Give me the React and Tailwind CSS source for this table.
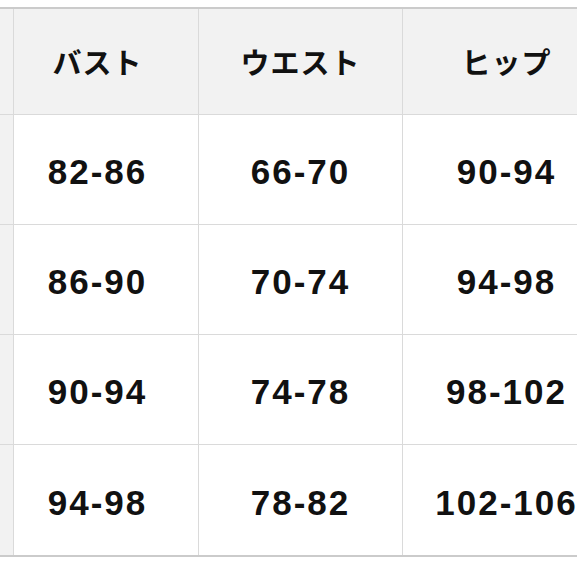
import React from "react";

const headers = ["バスト", "ウエスト", "ヒップ"];

const rows = [
  ["82-86", "66-70", "90-94"],
  ["86-90", "70-74", "94-98"],
  ["90-94", "74-78", "98-102"],
  ["94-98", "78-82", "102-106"],
];

export default function App() {
  return (
    <div className="w-[577px] h-[577px] overflow-hidden bg-white pt-[7px]">
      <div
        className="w-[611px] grid grid-cols-[14px_185px_204px_208px] border-t-2 border-b-2 border-[#cbcbcb] text-[#111]"
        style={{ fontFamily: '"Liberation Sans", "Noto Sans CJK JP", sans-serif' }}
      >
        {/* header row */}
        <div className="h-[106px] bg-[#f2f2f2] border-r border-b border-[#dadada]" />
        {headers.map((h, i) => (
          <div
            key={h}
            className={
              "h-[106px] bg-[#f2f2f2] border-r border-b border-[#dadada] flex items-center justify-center text-[29px] font-bold tracking-[1px] " +
              (i === 0 ? "pr-[17px]" : "")
            }
            style={{ fontFamily: '"Noto Sans CJK JP", sans-serif' }}
          >
            {h}
          </div>
        ))}

        {/* body rows */}
        {rows.map((r, ri) => (
          <React.Fragment key={ri}>
            <div
              className={
                "h-[110px] bg-[#f2f2f2] border-r border-[#dadada] " +
                (ri < rows.length - 1 ? "border-b" : "")
              }
            />
            {r.map((v, ci) => (
              <div
                key={ci}
                className={
                  "h-[110px] bg-white border-r border-[#dadada] flex items-center justify-center pt-[6px] text-[35px] font-bold tracking-[2px] " +
                  (ri < rows.length - 1 ? "border-b " : "") +
                  (ci === 0 ? "pr-[17px]" : "")
                }
              >
                {v}
              </div>
            ))}
          </React.Fragment>
        ))}
      </div>
    </div>
  );
}
